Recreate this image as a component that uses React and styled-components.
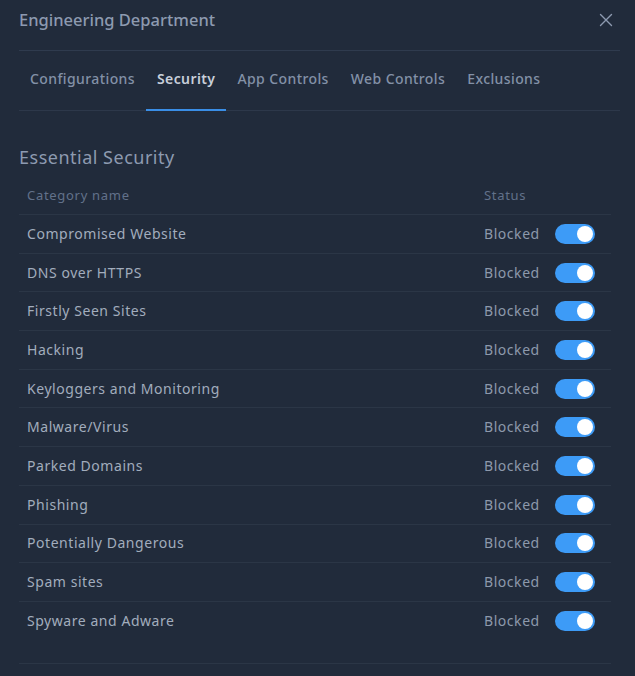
import React from "react";
import styled, { createGlobalStyle } from "styled-components";

const GlobalStyle = createGlobalStyle`
  html, body {
    margin: 0;
    padding: 0;
    background: #212b3b;
  }
  body {
    font-family: "Noto Sans", "Open Sans", sans-serif;
  }
`;

const tabs = ["Configurations", "Security", "App Controls", "Web Controls", "Exclusions"];

const categories = [
  "Compromised Website",
  "DNS over HTTPS",
  "Firstly Seen Sites",
  "Hacking",
  "Keyloggers and Monitoring",
  "Malware/Virus",
  "Parked Domains",
  "Phishing",
  "Potentially Dangerous",
  "Spam sites",
  "Spyware and Adware",
];

const Toggle = ({ on }) => (
  <Switch $on={on}>
    <Knob />
  </Switch>
);

const App = () => {
  return (
    <>
      <GlobalStyle />
      <Panel>
        <Header>
          <Title>Engineering Department</Title>
          <Close aria-label="Close">
            <svg width="14" height="14" viewBox="0 0 14 14">
              <path d="M1.5 1.5 L12.5 12.5 M12.5 1.5 L1.5 12.5" stroke="#8d9ab0" strokeWidth="1.4" strokeLinecap="round" />
            </svg>
          </Close>
        </Header>
        <Tabs>
          {tabs.map((t) => (
            <Tab key={t} $active={t === "Security"}>
              {t}
            </Tab>
          ))}
        </Tabs>
        <Section>
          <SectionTitle>Essential Security</SectionTitle>
          <Table>
            <HeadRow>
              <span>Category name</span>
              <span>Status</span>
            </HeadRow>
            {categories.map((c) => (
              <Row key={c}>
                <Name>{c}</Name>
                <Status>
                  <span>Blocked</span>
                  <Toggle on />
                </Status>
              </Row>
            ))}
          </Table>
        </Section>
      </Panel>
    </>
  );
};

const Panel = styled.div`
  width: 635px;
  height: 676px;
  box-sizing: border-box;
  padding: 0 15px 0 19px;
  background: #212b3b;
  overflow: hidden;
`;

const Header = styled.div`
  display: flex;
  align-items: center;
  justify-content: space-between;
  height: 50px;
  border-bottom: 1px solid #2f3b4e;
`;

const Title = styled.h1`
  margin: -11px 0 0;
  font-size: 16.5px;
  font-weight: 500;
  color: #8d9ab0;
`;

const Close = styled.button`
  display: flex;
  margin: -10px 7px 0 0;
  padding: 0;
  border: none;
  background: none;
`;

const Tabs = styled.div`
  display: flex;
  height: 59px;
  border-bottom: 1px solid #2d384a;
`;

const Tab = styled.div`
  display: flex;
  align-items: center;
  padding: 0 11px 3px;
  font-size: 14px;
  letter-spacing: 0.4px;
  font-weight: ${(p) => (p.$active ? 600 : 500)};
  color: ${(p) => (p.$active ? "#c8cfda" : "#8391a7")};
  border-bottom: 2px solid ${(p) => (p.$active ? "#3a8ee6" : "transparent")};
  margin-bottom: -1px;
`;

const Section = styled.div`
  padding-top: 35px;
  padding-right: 9px;
`;

const SectionTitle = styled.h2`
  margin: 0;
  line-height: 22px;
  font-size: 18px;
  letter-spacing: 0.5px;
  font-weight: 400;
  color: #8d9ab0;
`;

const Table = styled.div`
  display: flex;
  flex-direction: column;
  border-bottom: 1px solid #2b3646;
  padding-bottom: 22px;
`;

const RowBase = styled.div`
  display: grid;
  grid-template-columns: 1fr 111px;
  align-items: center;
  padding: 0 16px 0 8px;
  border-bottom: 1px solid #2b3646;
`;

const HeadRow = styled(RowBase)`
  padding-top: 18px;
  padding-bottom: 10px;
  line-height: 18px;
  font-size: 13px;
  letter-spacing: 0.7px;
  color: #62718a;
`;

const Row = styled(RowBase)`
  box-sizing: border-box;
  height: 38.7px;
  padding-bottom: 1px;
  font-size: 14px;
  letter-spacing: 0.55px;
  color: #a2adbd;
  &:last-child {
    border-bottom: none;
  }
`;

const Name = styled.span``;

const Status = styled.div`
  display: flex;
  align-items: center;
  justify-content: space-between;
  color: #8d99ab;
`;

const Switch = styled.div`
  position: relative;
  width: 40px;
  height: 20px;
  margin-top: 1px;
  border-radius: 10px;
  background: ${(p) => (p.$on ? "#3d9bf7" : "#3a4659")};
`;

const Knob = styled.div`
  position: absolute;
  top: 2px;
  right: 2px;
  width: 16px;
  height: 16px;
  border-radius: 50%;
  background: #fff;
`;

export default App;
